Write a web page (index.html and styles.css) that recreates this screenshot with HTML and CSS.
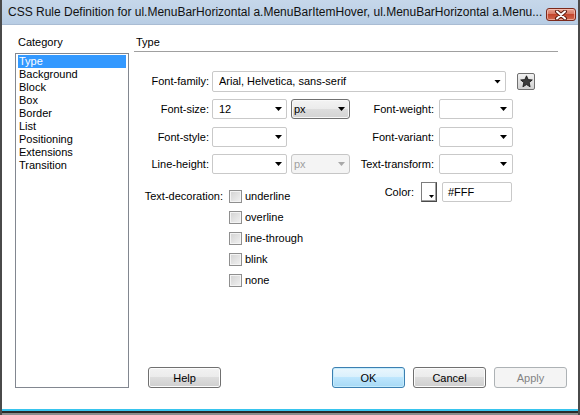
FILE: index.html
```html
<!DOCTYPE html>
<html lang="en">
<head>
  <meta charset="UTF-8" />
  <title>CSS Rule Definition</title>
  <link rel="stylesheet" href="styles.css">
</head>
<body>

<div class="window">

  <!-- Title bar -->
  <div class="titlebar">
    <span class="title">CSS Rule Definition for ul.MenuBarHorizontal a.MenuBarItemHover, ul.MenuBarHorizontal a.Menu...</span>
    <button class="close-btn" aria-label="Close">
      <svg width="14" height="10" viewBox="0 0 14 10">
        <path d="M3 1.5 L11 8.5 M11 1.5 L3 8.5" stroke="#5b1d12" stroke-width="4" stroke-linecap="round" fill="none"/>
        <path d="M3 1.5 L11 8.5 M11 1.5 L3 8.5" stroke="#ffffff" stroke-width="2" stroke-linecap="round" fill="none"/>
      </svg>
    </button>
  </div>

  <div class="client">

    <!-- Category list -->
    <div class="sidebar">
      <div class="caption">Category</div>
      <ul class="category-list">
        <li class="selected">Type</li>
        <li>Background</li>
        <li>Block</li>
        <li>Box</li>
        <li>Border</li>
        <li>List</li>
        <li>Positioning</li>
        <li>Extensions</li>
        <li>Transition</li>
      </ul>
    </div>

    <!-- Type panel -->
    <div class="panel">
      <div class="caption panel-title">Type</div>
      <div class="rule"></div>

      <div class="form">
        <div class="row row-family">
          <span class="lbl">Font-family:</span>
          <div class="combo combo-family"><span class="val">Arial, Helvetica, sans-serif</span><span class="arrow"></span></div>
          <button class="star-btn" aria-label="Edit font list">
            <svg width="13" height="13" viewBox="0 0 13 13">
              <polygon points="6.5,0.8 8.2,4.6 12.3,4.9 9.2,7.6 10.1,11.8 6.5,9.6 2.9,11.8 3.8,7.6 0.7,4.9 4.8,4.6" fill="#3d3d3d" stroke="#111" stroke-width="0.8" stroke-linejoin="round"/>
            </svg>
          </button>
        </div>

        <div class="row">
          <span class="lbl">Font-size:</span>
          <div class="combo combo-small"><span class="val">12</span><span class="arrow"></span></div>
          <div class="unit"><span class="val">px</span><span class="arrow"></span></div>
          <span class="lbl lbl-right">Font-weight:</span>
          <div class="combo combo-right"><span class="val"></span><span class="arrow"></span></div>
        </div>

        <div class="row row-shift">
          <span class="lbl">Font-style:</span>
          <div class="combo combo-small"><span class="val"></span><span class="arrow"></span></div>
          <div class="unit-space"></div>
          <span class="lbl lbl-right">Font-variant:</span>
          <div class="combo combo-right"><span class="val"></span><span class="arrow"></span></div>
        </div>

        <div class="row">
          <span class="lbl">Line-height:</span>
          <div class="combo combo-small"><span class="val"></span><span class="arrow"></span></div>
          <div class="unit unit-disabled"><span class="val">px</span><span class="arrow"></span></div>
          <span class="lbl lbl-right">Text-transform:</span>
          <div class="combo combo-right"><span class="val"></span><span class="arrow"></span></div>
        </div>

        <div class="bottom-section row-shift">
          <div class="decor">
            <span class="decor-label">Text-decoration:</span>
            <div class="checks">
              <label class="check"><span class="box"></span>underline</label>
              <label class="check"><span class="box"></span>overline</label>
              <label class="check"><span class="box"></span>line-through</label>
              <label class="check"><span class="box"></span>blink</label>
              <label class="check"><span class="box"></span>none</label>
            </div>
          </div>

          <div class="color-group">
            <span class="color-label">Color:</span>
            <button class="swatch" aria-label="Pick color"><span class="swatch-arrow"></span></button>
            <div class="color-input">#FFF</div>
          </div>
        </div>
      </div>

      <div class="buttons">
        <button class="btn btn-help">Help</button>
        <button class="btn btn-default btn-ok">OK</button>
        <button class="btn">Cancel</button>
        <button class="btn btn-disabled">Apply</button>
      </div>
    </div>

  </div>

  <div class="bottom-edge"></div>
</div>

</body>
</html>
```

FILE: styles.css
```css
* { box-sizing: border-box; }
body {
  margin: 0;
  font-family: 'Liberation Sans', Arial, sans-serif;
  font-size: 11px;
  line-height: 13px;
  color: #000;
  background: #fff;
}
button {
  font-family: inherit;
  font-size: 11px;
  color: #000;
  margin: 0;
  padding: 0;
  cursor: pointer;
}

.window {
  width: 580px;
  height: 415px;
  display: flex;
  flex-direction: column;
  border-left: 2px solid #4a4a4a;
  border-right: 2px solid #4a4a4a;
  background: #fff;
}

/* title bar */
.titlebar {
  height: 25px;
  flex: none;
  display: flex;
  align-items: flex-start;
  padding: 0 2px 0 6px;
  background: linear-gradient(#c6d7ea, #b8cde4);
  border-bottom: 1px solid #a9bcd3;
}
.title {
  flex: 1;
  padding-top: 6px;
  font-size: 12px;
  white-space: nowrap;
  overflow: hidden;
  color: #111;
}
.close-btn {
  width: 30px;
  height: 13px;
  margin-top: 8px;
  border: 1px solid #7c2a1c;
  border-radius: 3px;
  background: linear-gradient(#e6a392, #d5735e 50%, #c4452c 50%, #cf6a50);
  box-shadow: inset 0 0 0 1px rgba(255, 210, 200, 0.6);
  display: flex;
  align-items: center;
  justify-content: center;
}

/* client area */
.client {
  flex: 1;
  display: flex;
  gap: 5px;
  padding: 11px 11px 21px 13px;
}
.sidebar {
  width: 114px;
  display: flex;
  flex-direction: column;
}
.caption {
  padding-left: 3px;
  height: 13px;
}
.category-list {
  flex: 1;
  list-style: none;
  margin: 4px 0 0;
  padding: 1px;
  border: 1px solid #828790;
}
.category-list li {
  height: 13px;
  padding-left: 1px;
  margin-left: 1px;
  margin-right: 1px;
}
.category-list li.selected {
  background: #3399ff;
  color: #fff;
}

.panel {
  flex: 1;
  display: flex;
  flex-direction: column;
}
.panel-title { padding-left: 2px; }
.rule {
  height: 1px;
  margin: 2px 9px 0 0;
  background: #a0a0a0;
}

/* form rows */
.form {
  margin-top: 19px;
  display: flex;
  flex-direction: column;
  gap: 7px;
}
.row {
  display: flex;
  align-items: center;
  height: 20px;
}
.row-family { height: 21px; }
.row-shift { margin-top: 1px; }
.lbl {
  width: 75px;
  text-align: right;
  margin-right: 3px;
  white-space: nowrap;
}
.lbl-right {
  width: 84px;
  margin-right: 5px;
}

.combo, .unit {
  height: 20px;
  display: flex;
  align-items: center;
  border: 1px solid #c9c9c9;
  border-radius: 2px;
  background: #fff;
  padding: 0 4px 0 6px;
}
.combo .val, .unit .val {
  flex: 1;
  white-space: nowrap;
  overflow: hidden;
}
.arrow {
  width: 7px;
  height: 4px;
  background: #000;
  clip-path: polygon(0 0, 100% 0, 50% 100%);
}
.combo-family {
  width: 294px;
  height: 21px;
}
.combo-small { width: 75px; }
.combo-right { width: 74px; padding-right: 5px; }

.unit {
  width: 59px;
  margin-left: 4px;
  padding-left: 2px;
  border-color: #707070;
  border-radius: 3px;
  background: linear-gradient(#f3f3f3, #ebebeb 50%, #dddddd 50%, #d3d3d3);
  box-shadow: inset 0 0 0 1px #f8f8f8;
}
.unit-disabled {
  border-color: #c6c6c6;
  background: #f4f4f4;
  box-shadow: none;
  color: #a0a0a0;
}
.unit-disabled .arrow { background: #a8a8a8; }
.unit-space {
  width: 59px;
  margin-left: 4px;
}

.star-btn {
  width: 18px;
  height: 17px;
  margin-left: 11px;
  border: 1px solid #707070;
  border-radius: 2px;
  background: linear-gradient(#f2f2f2, #e0e0e0 50%, #d2d2d2);
  display: flex;
  align-items: center;
  justify-content: center;
}

/* text decoration + color */
.bottom-section {
  display: flex;
  align-items: flex-start;
}
.decor {
  display: flex;
  margin-top: 8px;
}
.decor-label {
  width: 89px;
  text-align: right;
  margin-right: 6px;
}
.checks {
  display: flex;
  flex-direction: column;
  gap: 8px;
}
.check {
  display: flex;
  align-items: center;
  gap: 3px;
  height: 13px;
}
.box {
  width: 13px;
  height: 13px;
  border: 1px solid #8f8f8f;
  background: linear-gradient(135deg, #d2d2d2, #f2f2f2);
  box-shadow: inset 0 0 0 1px #f4f4f4;
}

.color-group {
  margin-left: auto;
  margin-right: 55px;
  display: flex;
  align-items: center;
  height: 20px;
}
.color-label { margin-right: 7px; }
.swatch {
  width: 16px;
  height: 20px;
  border: 1px solid #7d7d7d;
  border-right-color: #4a4a4a;
  border-bottom-color: #4a4a4a;
  background: #fff;
  box-shadow: inset -1px -1px 0 #a0a0a0;
  display: flex;
  align-items: flex-end;
  justify-content: flex-end;
  padding: 0 2px 3px 0;
}
.swatch-arrow {
  width: 5px;
  height: 3px;
  background: #000;
  clip-path: polygon(0 0, 100% 0, 50% 100%);
}
.color-input {
  width: 70px;
  height: 20px;
  margin-left: 5px;
  border: 1px solid #c9c9c9;
  border-radius: 2px;
  padding: 3px 0 0 5px;
}

/* dialog buttons */
.buttons {
  margin-top: auto;
  display: flex;
  gap: 8px;
}
.btn {
  width: 73px;
  height: 21px;
  border: 1px solid #707070;
  border-radius: 3px;
  background: linear-gradient(#f2f2f2, #ebebeb 50%, #dddddd 50%, #cfcfcf);
  box-shadow: inset 0 0 0 1px #fcfcfc;
}
.btn-help { margin-left: 14px; }
.btn-ok { margin-left: auto; }
.btn-default {
  border-color: #3c7fb1;
  background: linear-gradient(#eaf6fd, #d9f0fc 50%, #bee6fd 50%, #a7d9f5);
  box-shadow: inset 0 0 0 1px #c4ecfd;
}
.btn-disabled {
  border-color: #adb2b5;
  background: #f4f4f4;
  box-shadow: none;
  color: #838383;
}

.bottom-edge {
  height: 6px;
  flex: none;
  border-top: 2px solid #37c4ee;
  border-bottom: 2px solid #8c8c8c;
  background: #2a2a2a;
}
```
